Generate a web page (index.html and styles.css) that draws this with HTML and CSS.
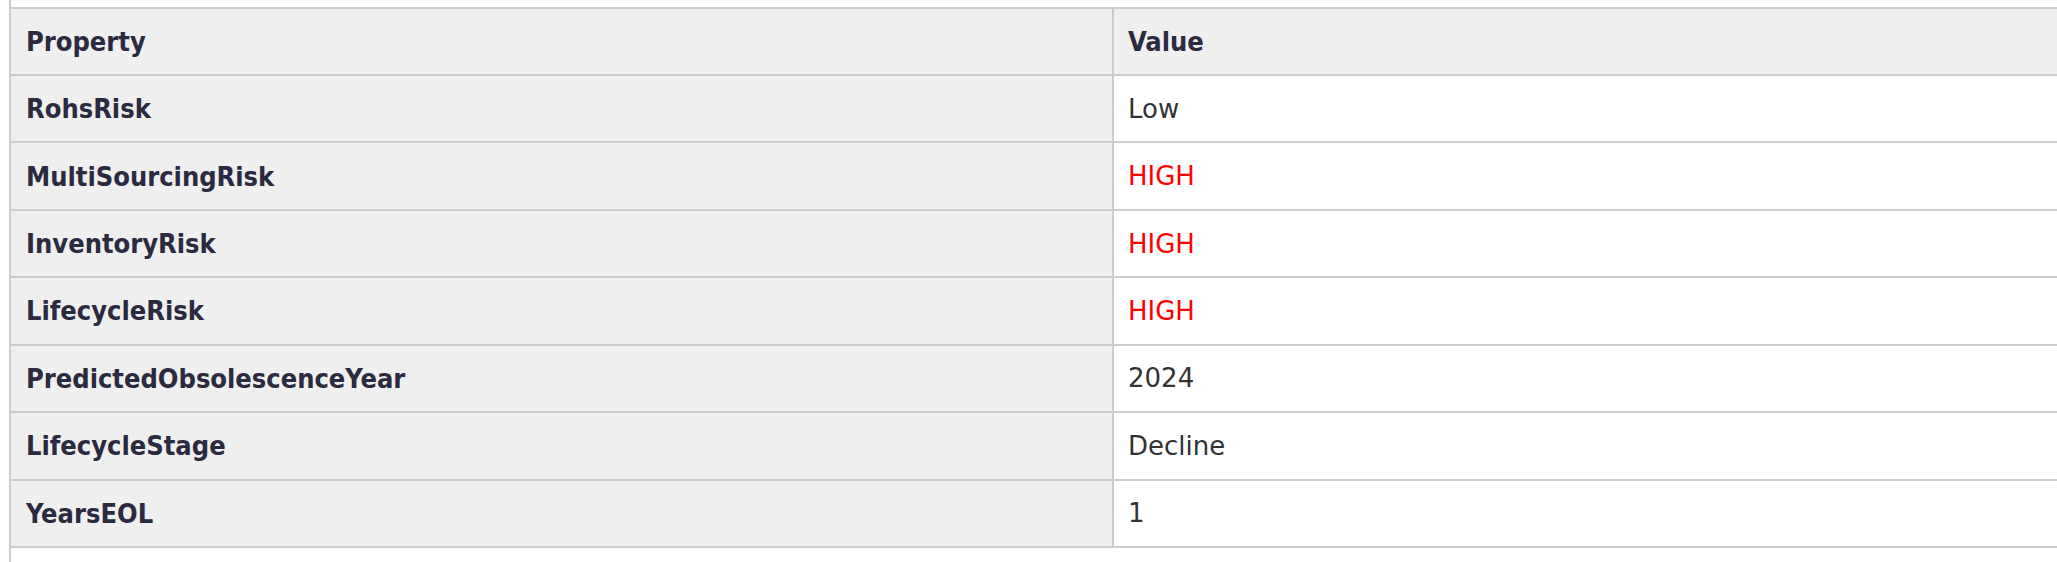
FILE: index.html
```html
<!DOCTYPE html>
<html lang="en">
<head>
<meta charset="utf-8">
<title>Part risk properties</title>
<link rel="stylesheet" href="styles.css">
</head>
<body>
<div class="panel">
  <table class="props">
    <thead>
      <tr class="head">
        <th class="key">Property</th>
        <th class="val">Value</th>
      </tr>
    </thead>
    <tbody>
      <tr><th class="key">RohsRisk</th><td class="val">Low</td></tr>
      <tr><th class="key">MultiSourcingRisk</th><td class="val high">HIGH</td></tr>
      <tr><th class="key">InventoryRisk</th><td class="val high">HIGH</td></tr>
      <tr><th class="key">LifecycleRisk</th><td class="val high">HIGH</td></tr>
      <tr><th class="key">PredictedObsolescenceYear</th><td class="val">2024</td></tr>
      <tr><th class="key">LifecycleStage</th><td class="val">Decline</td></tr>
      <tr><th class="key">YearsEOL</th><td class="val">1</td></tr>
    </tbody>
  </table>
</div>
</body>
</html>
```

FILE: styles.css
```css
html, body {
  margin: 0;
  padding: 0;
  background: #ffffff;
  overflow: hidden;
}

.panel {
  margin-left: 9px;
  border-left: 2px solid #cccccc;
  height: 100vh;
  padding-top: 7px;
  box-sizing: border-box;
}

.props {
  width: 100%;
  table-layout: fixed;
  border-collapse: separate;
  border-spacing: 0;
  border-top: 2px solid #cccccc;
}

.props th,
.props td {
  height: 65.43px;
  padding: 0 12px 0 14px;
  border-bottom: 2px solid #cccccc;
  vertical-align: middle;
  text-align: left;
  white-space: nowrap;
}

.props .head th {
  height: 65px;
  background: #efefef;
}

.props .key {
  width: 1074px;
  padding-left: 15px;
  background: #efefef;
  border-right: 2px solid #cccccc;
  font-family: "DejaVu Sans Condensed", "DejaVu Sans", sans-serif;
  font-stretch: condensed;
  font-weight: bold;
  font-size: 27px;
  color: #2a2a40;
}

.props th.val {
  font-family: "DejaVu Sans Condensed", "DejaVu Sans", sans-serif;
  font-stretch: condensed;
  font-weight: bold;
  font-size: 27px;
  color: #2a2a40;
}

.props td.val {
  background: #ffffff;
  font-family: "DejaVu Sans", sans-serif;
  font-weight: normal;
  font-size: 26px;
  color: #333333;
}

.props td.high {
  color: #ff0000;
}
```
